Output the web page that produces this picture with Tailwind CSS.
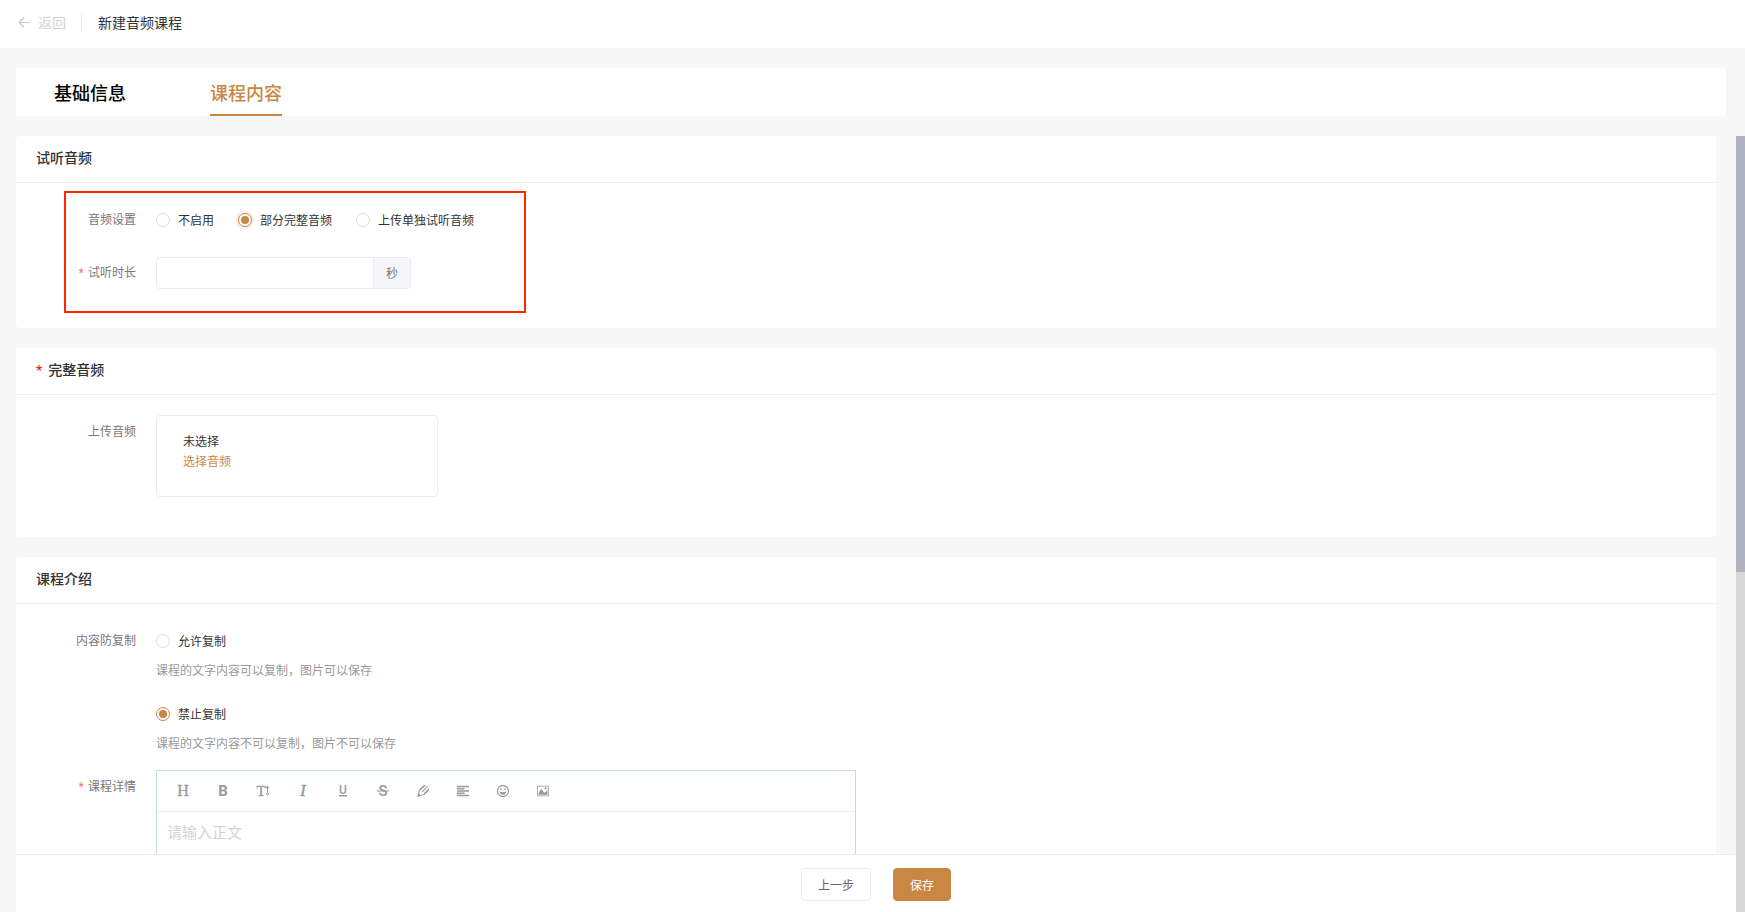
<!DOCTYPE html>
<html lang="zh-CN">
<head>
<meta charset="utf-8">
<meta name="viewport" content="width=device-width, initial-scale=1">
<title>新建音频课程</title>
<script src="https://cdn.jsdelivr.net/npm/@tailwindcss/browser@4"></script>
</head>
<body class="flex h-screen flex-col overflow-hidden bg-[#f7f7f7] font-['Noto_Sans_CJK_SC',sans-serif] text-xs text-[#333]">

<header class="flex h-12 shrink-0 items-center bg-white pb-1 pl-[17px] text-sm">
  <a href="#" class="flex items-center gap-[7px] text-[#d4d4d4]">
    <svg class="size-3.5" viewBox="0 0 14 14" fill="none" stroke="#c8c8c8" stroke-width="1.2"><path d="M13 7.500H2M7 2.500l-5 5 5 5"/></svg>
    返回
  </a>
  <span class="ml-[15px] h-5 w-px bg-[#ebebeb]"></span>
  <h1 class="ml-4">新建音频课程</h1>
</header>

<nav class="mt-5 mr-[19px] ml-4 flex h-12 shrink-0 gap-[84px] rounded bg-white pl-[38px] text-lg leading-12 font-medium">
  <a href="#" class="text-black">基础信息</a>
  <a href="#" aria-current="page" class="border-b-2 border-[#c98743] text-[#c98743]">课程内容</a>
</nav>

<div class="mt-5 flex min-h-0 flex-1">
  <div class="flex min-w-0 flex-1 flex-col pl-4">
    <main class="min-h-0 flex-1 overflow-hidden pr-5">

      <section class="mb-5 rounded bg-white pb-[15px]">
        <h2 class="border-b border-[#f0f0f0] px-5 pb-1 text-sm leading-[42px] font-medium">试听音频</h2>
        <div class="mt-2 ml-12 flex w-[462px] flex-col gap-[22px] border-2 border-[#ff2600] pt-2.5 pb-[22px]">
          <div class="flex gap-5" role="radiogroup" aria-labelledby="preview-label">
            <span id="preview-label" class="w-[70px] text-right leading-8 text-[#777]">音频设置</span>
            <div class="flex h-8 items-center gap-6 pt-0.5">
              <label class="flex items-center gap-2"><input type="radio" name="preview" class="grid size-3.5 appearance-none place-content-center rounded-full border border-[#ddd] bg-white">不启用</label>
              <label class="flex items-center gap-2"><input type="radio" name="preview" checked class="grid size-3.5 appearance-none place-content-center rounded-full border border-[#c98743] bg-white shadow-[0_0_2px_2px_#f6ece3] before:size-2 before:rounded-full before:bg-[#c98743] before:content-['']">部分完整音频</label>
              <label class="flex items-center gap-2"><input type="radio" name="preview" class="grid size-3.5 appearance-none place-content-center rounded-full border border-[#ddd] bg-white">上传单独试听音频</label>
            </div>
          </div>
          <div class="flex gap-5">
            <label for="duration" class="w-[70px] text-right leading-[30px] text-[#777]"><span class="mr-1 align-[-1px] font-['Liberation_Sans',sans-serif] text-sm leading-none text-[#f56c6c]">*</span>试听时长</label>
            <div class="flex h-8 w-[255px] overflow-hidden rounded border border-[#ebebeb]">
              <input id="duration" type="text" class="min-w-0 flex-1 px-3 outline-none">
              <span class="border-l border-[#ebebeb] bg-[#f5f7fa] px-3 leading-[30px] text-[#777]">秒</span>
            </div>
          </div>
        </div>
      </section>

      <section class="mb-5 rounded bg-white pb-10">
        <h2 class="border-b border-[#f0f0f0] px-5 pb-1 text-sm leading-[42px] font-medium"><span class="mr-1.5 align-[-2px] font-['Liberation_Sans',sans-serif] text-base leading-none text-[#f00]">*</span>完整音频</h2>
        <div class="mt-5 flex gap-5">
          <span class="w-[120px] text-right leading-8 text-[#777]">上传音频</span>
          <div class="flex h-[82px] w-[282px] flex-col items-start rounded border border-[#ebebeb] px-[26px] py-[15px] leading-5">
            <span>未选择</span>
            <button type="button" class="text-[#c98743]">选择音频</button>
          </div>
        </div>
      </section>

      <section class="rounded-t bg-white">
        <h2 class="border-b border-[#f0f0f0] px-5 pb-1 text-sm leading-[42px] font-medium">课程介绍</h2>
        <div class="mt-5 flex gap-5" role="radiogroup" aria-labelledby="copy-label">
          <span id="copy-label" class="w-[120px] text-right leading-8 text-[#777]">内容防复制</span>
          <div>
            <label class="flex h-[34px] items-center gap-2"><input type="radio" name="copy" class="grid size-3.5 appearance-none place-content-center rounded-full border border-[#ddd] bg-white">允许复制</label>
            <p class="mb-[15px] leading-6 text-[#999]">课程的文字内容可以复制，图片可以保存</p>
            <label class="flex h-[34px] items-center gap-2"><input type="radio" name="copy" checked class="grid size-3.5 appearance-none place-content-center rounded-full border border-[#c98743] bg-white before:size-2 before:rounded-full before:bg-[#c98743] before:content-['']">禁止复制</label>
            <p class="mb-[15px] leading-6 text-[#999]">课程的文字内容不可以复制，图片不可以保存</p>
          </div>
        </div>
        <div class="flex gap-5">
          <label for="detail" class="w-[120px] text-right leading-8 text-[#777]"><span class="mr-1 align-[-1px] font-['Liberation_Sans',sans-serif] text-sm leading-none text-[#f56c6c]">*</span>课程详情</label>
          <div class="w-[700px] border border-[#c9d8db]">
            <div class="flex h-[41px] items-center border-b border-[#eee] pl-1.5 text-[#999]">
              <button type="button" aria-label="标题" class="flex w-10 justify-center"><svg class="size-3.5 overflow-visible" viewBox="0 0 14 14" fill="currentColor" stroke="currentColor" stroke-width=".3"><text x="7" y="12" text-anchor="middle" font-family="Liberation Serif" font-size="16">H</text></svg></button>
              <button type="button" aria-label="加粗" class="flex w-10 justify-center"><svg class="size-3.5 overflow-visible" viewBox="0 0 14 14" fill="currentColor"><text x="7" y="12" text-anchor="middle" font-family="Roboto" font-weight="700" font-size="15">B</text></svg></button>
              <button type="button" aria-label="字号" class="flex w-10 justify-center"><svg class="size-3.5 overflow-visible" viewBox="0 0 14 14" fill="currentColor"><text x="0.5" y="12" font-family="Liberation Serif" font-size="15" stroke="currentColor" stroke-width=".3">T</text><path d="M11 3.500h1v7h-1zM9.500 4.200l2-2.700 2 2.700zM9.500 9.300l2 2.700 2-2.700z"/></svg></button>
              <button type="button" aria-label="斜体" class="flex w-10 justify-center"><svg class="size-3.5 overflow-visible" viewBox="0 0 14 14" fill="currentColor" stroke="currentColor" stroke-width=".5"><text x="7" y="12" text-anchor="middle" font-family="Liberation Serif" font-style="italic" font-size="16">I</text></svg></button>
              <button type="button" aria-label="下划线" class="flex w-10 justify-center"><svg class="size-3.5 overflow-visible" viewBox="0 0 14 14" fill="currentColor"><text x="7" y="9.500" text-anchor="middle" font-family="Roboto" font-weight="500" font-size="12">U</text><path d="M3 11h8v1.500H3z"/></svg></button>
              <button type="button" aria-label="删除线" class="flex w-10 justify-center"><svg class="size-3.5 overflow-visible" viewBox="0 0 14 14" fill="currentColor"><text x="7" y="12" text-anchor="middle" font-family="Roboto" font-weight="500" font-size="15">S</text><path d="M1 6.500h12v1H1z"/></svg></button>
              <button type="button" aria-label="文字颜色" class="flex w-10 justify-center"><svg class="size-3" viewBox="0 0 32 32" fill="currentColor"><path d="M12 20l4-2 14-14-2-2-14 14-2 4zM9.041 27.097c-.989-2.085-2.052-3.149-4.137-4.137l3.097-8.525 4-2.435 12-12h-6l-12 12-6 20 20-6 12-12v-6l-12 12-2.435 4z"/></svg></button>
              <button type="button" aria-label="对齐" class="flex w-10 justify-center"><svg class="size-3" viewBox="0 0 32 32" fill="currentColor"><path d="M0 2h32v4H0zM0 8h20v4H0zM0 20h20v4H0zM0 14h32v4H0zM0 26h32v4H0z"/></svg></button>
              <button type="button" aria-label="表情" class="flex w-10 justify-center"><svg class="size-3" viewBox="0 0 32 32" fill="currentColor"><path fill-rule="evenodd" d="M16 32c8.837 0 16-7.163 16-16S24.837 0 16 0 0 7.163 0 16s7.163 16 16 16zm0-29c7.180 0 13 5.820 13 13s-5.820 13-13 13S3 23.180 3 16 8.820 3 16 3z"/><circle cx="10.500" cy="11" r="2.200"/><circle cx="21.500" cy="11" r="2.200"/><path d="M7 17c3 1.300 6 2 9 2s6-.7 9-2c-.5 5-4.200 9-9 9s-8.500-4-9-9z"/></svg></button>
              <button type="button" aria-label="图片" class="flex w-10 justify-center"><svg class="size-3" viewBox="0 0 32 32" fill="currentColor"><path fill-rule="evenodd" d="M2 2h28a2 2 0 0 1 2 2v24a2 2 0 0 1-2 2H2a2 2 0 0 1-2-2V4a2 2 0 0 1 2-2zm0 2v24h28V4z"/><circle cx="23" cy="9" r="3"/><path d="M28 26H4v-4l7-12 8 10h2l7-6z"/></svg></button>
            </div>
            <textarea id="detail" placeholder="请输入正文" class="block h-75 w-full resize-none px-2.5 py-[9px] text-[15px] leading-[22px] outline-none placeholder:text-[#d4d4d4]"></textarea>
          </div>
        </div>
      </section>
    </main>

    <footer class="flex shrink-0 justify-center gap-[22px] rounded-t border-t border-[#ebebeb] bg-white pt-[13px] pb-[11px]">
      <button type="button" class="rounded border border-[#ebebeb] px-4 leading-[31px] text-[#666]">上一步</button>
      <button type="button" class="rounded border border-[#c98743] bg-[#c98743] px-4 leading-[31px] text-white">保存</button>
    </footer>
  </div>
  <div class="w-[9px] shrink-0 bg-[#d8d8d8]"><div class="h-[56.2%] bg-[#b0b2c0]"></div></div>
</div>
</body>
</html>
